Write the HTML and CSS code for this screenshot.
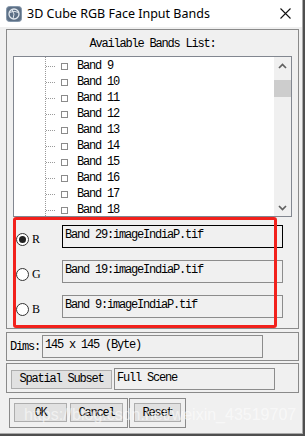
FILE: index.html
```html
<!DOCTYPE html>
<html lang="en">
<head>
  <meta charset="UTF-8" />
  <title>3D Cube RGB Face Input Bands</title>
  <link rel="stylesheet" href="styles.css">
</head>
<body>
  <div class="window">
    <div class="titlebar">
      <svg class="app-icon" width="16" height="16" viewBox="0 0 16 16">
        <rect x="0.5" y="0.5" width="15" height="15" rx="3" fill="#5d7086" stroke="#8497ab"/>
        <circle cx="8" cy="8" r="5" fill="none" stroke="#e3e9ef" stroke-width="1.3"/>
        <path d="M3.5 6.5 Q8 4 12.5 6.5" fill="none" stroke="#e3e9ef" stroke-width="1"/>
        <path d="M6 3.5 Q9.5 8 7 12.8" fill="none" stroke="#e3e9ef" stroke-width="1"/>
      </svg>
      <span class="title">3D Cube RGB Face Input Bands</span>
      <svg class="close" width="11" height="11" viewBox="0 0 11 11">
        <path d="M0.5 0.5 L10.5 10.5 M10.5 0.5 L0.5 10.5" stroke="#111" stroke-width="1.1"/>
      </svg>
    </div>

    <div class="group bands">
      <div class="caption">Available Bands List:</div>
      <div class="listbox">
        <ul class="tree">
          <li><span class="twig"></span><span class="check"></span>Band 9</li>
          <li><span class="twig"></span><span class="check"></span>Band 10</li>
          <li><span class="twig"></span><span class="check"></span>Band 11</li>
          <li><span class="twig"></span><span class="check"></span>Band 12</li>
          <li><span class="twig"></span><span class="check"></span>Band 13</li>
          <li><span class="twig"></span><span class="check"></span>Band 14</li>
          <li><span class="twig"></span><span class="check"></span>Band 15</li>
          <li><span class="twig"></span><span class="check"></span>Band 16</li>
          <li><span class="twig"></span><span class="check"></span>Band 17</li>
          <li><span class="twig"></span><span class="check"></span>Band 18</li>
        </ul>
        <div class="scrollbar">
          <div class="arrow">
            <svg width="9" height="6" viewBox="0 0 9 6"><polyline points="1,5 4.5,1.5 8,5" fill="none" stroke="#606060" stroke-width="1.7"/></svg>
          </div>
          <div class="thumb"></div>
          <div class="arrow down">
            <svg width="9" height="6" viewBox="0 0 9 6"><polyline points="1,1 4.5,4.5 8,1" fill="none" stroke="#606060" stroke-width="1.7"/></svg>
          </div>
        </div>
      </div>

      <div class="rgb">
        <div class="rgb-row">
          <label class="radio"><span class="dot on"></span>R</label>
          <div class="field active">Band 29:imageIndiaP.tif</div>
        </div>
        <div class="rgb-row">
          <label class="radio"><span class="dot"></span>G</label>
          <div class="field">Band 19:imageIndiaP.tif</div>
        </div>
        <div class="rgb-row">
          <label class="radio"><span class="dot"></span>B</label>
          <div class="field">Band 9:imageIndiaP.tif</div>
        </div>
      </div>
    </div>

    <div class="group dims">
      <span class="label">Dims:</span>
      <div class="field dims-field">145 x 145 (Byte)</div>
    </div>

    <div class="group subset">
      <button class="btn subset-btn">Spatial Subset</button>
      <div class="field subset-field">Full Scene</div>
    </div>

    <div class="actions">
      <div class="group btns">
        <button class="btn">OK</button>
        <button class="btn">Cancel</button>
      </div>
      <div class="group btns reset">
        <button class="btn">Reset</button>
      </div>
    </div>

    <div class="highlight"></div>
    <div class="watermark">https://blog.csdn.net/weixin_43519707</div>
  </div>
</body>
</html>
```

FILE: styles.css
```css
* {
  margin: 0;
  padding: 0;
  box-sizing: border-box;
}
body {
  background-color: #4f4f4f;
  font-family: "Liberation Mono", "DejaVu Sans Mono", monospace;
  font-size: 12px;
  letter-spacing: -1.2px;
  color: #000;
}
.window {
  position: relative;
  display: flex;
  flex-direction: column;
  width: 303px;
  height: 434px;
  background-color: #f0f0f0;
  border-right: 1px solid #a9a9a9;
  border-bottom: 1px solid #a9a9a9;
}
.titlebar {
  display: flex;
  align-items: center;
  height: 27px;
  background-color: #fff;
  padding-left: 6px;
  margin-bottom: 2px;
}
.title {
  margin-left: 5px;
  font-family: "Noto Sans", sans-serif;
  font-size: 12.5px;
  letter-spacing: 0;
  color: #000;
}
.close {
  margin-left: auto;
  margin-right: 11px;
}
.group {
  border: 1px solid #8a8a8a;
}
.bands {
  width: 293px;
  margin-left: 6px;
  padding: 7px 6px 10px 6px;
}
.caption {
  height: 14px;
  line-height: 14px;
  text-align: center;
  margin-bottom: 5px;
}
.listbox {
  display: flex;
  height: 161px;
  background-color: #fff;
  border: 1px solid #828790;
  overflow: hidden;
}
.tree {
  list-style: none;
  flex: 1;
  margin-left: 31px;
  padding-top: 1px;
  border-left: 1px dotted #9a9a9a;
}
.tree li {
  display: flex;
  align-items: center;
  height: 16px;
}
.twig {
  width: 9px;
  border-top: 1px dotted #9a9a9a;
  margin-right: 6px;
}
.check {
  width: 7px;
  height: 7px;
  border: 1px solid #8b8b8b;
  margin-right: 9px;
}
.scrollbar {
  display: flex;
  flex-direction: column;
  width: 17px;
  background-color: #f0f0f0;
}
.arrow {
  display: flex;
  align-items: center;
  justify-content: center;
  height: 17px;
}
.arrow.down {
  margin-top: auto;
}
.thumb {
  height: 17px;
  margin-top: 6px;
  background-color: #cdcdcd;
}
.rgb {
  display: flex;
  flex-direction: column;
  gap: 12px;
  margin-top: 8px;
}
.rgb-row {
  display: flex;
  height: 23px;
}
.radio {
  display: flex;
  align-items: center;
  width: 49px;
  height: 13px;
  margin-top: 8px;
  padding-left: 3px;
  font-family: "Liberation Serif", serif;
  font-size: 12px;
  letter-spacing: 0;
}
.dot {
  display: flex;
  align-items: center;
  justify-content: center;
  width: 13px;
  height: 13px;
  margin-right: 3px;
  border: 1px solid #333;
  border-radius: 50%;
  background-color: #fff;
}
.dot.on::after {
  content: "";
  width: 7px;
  height: 7px;
  border-radius: 50%;
  background-color: #222;
}
.field {
  width: 221px;
  height: 23px;
  padding: 2px 2px;
  line-height: 14px;
  border: 1px solid #8c8c8c;
  background-color: #f0f0f0;
  white-space: nowrap;
}
.field.active {
  border-color: #000;
}
.dims {
  display: flex;
  align-items: center;
  width: 293px;
  margin: 3px 0 0 6px;
  padding: 2px 0 2px 3px;
}
.label {
  width: 30px;
}
.dims-field {
  margin-left: 2px;
}
.subset {
  display: flex;
  align-items: center;
  width: 293px;
  margin: 2px 0 0 6px;
  padding: 4px 0 2px 4px;
}
.btn {
  height: 19px;
  font-family: inherit;
  font-size: 12px;
  letter-spacing: -1.2px;
  color: #000;
  background-color: #e1e1e1;
  border: 1px solid #adadad;
}
.subset-btn {
  width: 101px;
}
.subset-field {
  width: 161px;
  height: 22px;
  margin-left: 2px;
}
.actions {
  display: flex;
  margin: 5px 0 0 9px;
}
.btns {
  display: flex;
  gap: 3px;
  padding: 4px 4px 5px 4px;
}
.btns .btn {
  width: 53px;
}
.reset {
  margin-left: 1px;
}
.reset .btn {
  width: 47px;
}
.highlight {
  position: absolute;
  left: 13px;
  top: 217px;
  width: 264px;
  height: 111px;
  border: 3px solid #f2211c;
  border-radius: 3px;
}
.watermark {
  position: absolute;
  left: 24px;
  top: 406px;
  font-family: "Liberation Sans", sans-serif;
  font-size: 16px;
  letter-spacing: 0;
  color: rgba(255, 255, 255, 0.55);
  white-space: nowrap;
}
```
